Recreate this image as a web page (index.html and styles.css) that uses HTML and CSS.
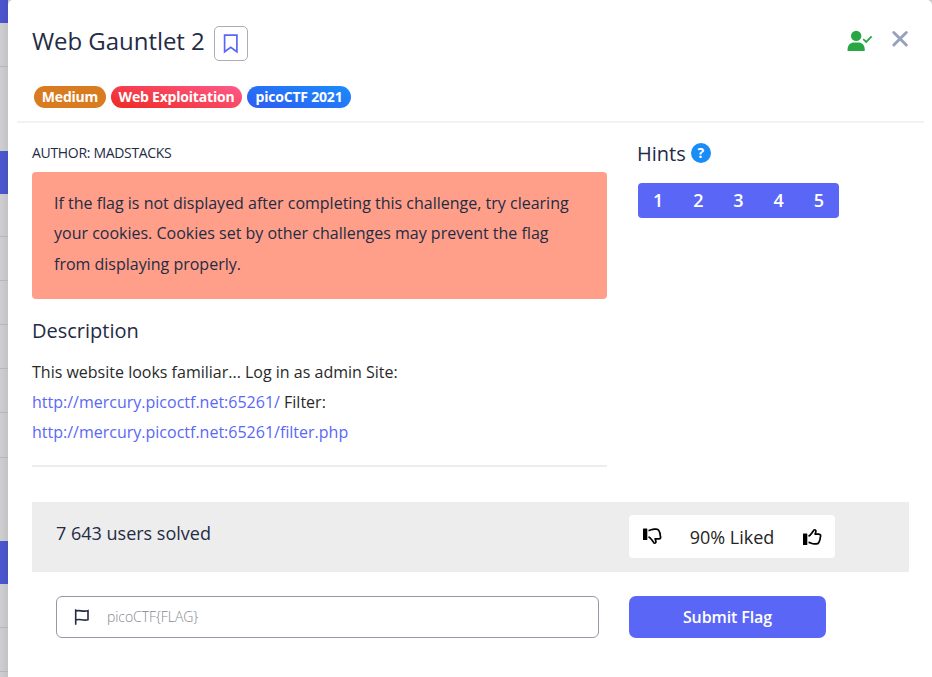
FILE: index.html
```html
<!DOCTYPE html>
<html lang="en">
<head>
<meta charset="utf-8">
<title>Web Gauntlet 2</title>
<link rel="stylesheet" href="styles.css">
</head>
<body>
<aside class="backdrop">
  <div class="cell active c23"></div>
  <div class="cell c44"></div>
  <div class="cell plain c84"></div>
  <div class="cell active c43"></div>
  <div class="cell c43"></div>
  <div class="cell c44"></div>
  <div class="cell c44"></div>
  <div class="cell c44"></div>
  <div class="cell c44"></div>
  <div class="cell c45"></div>
  <div class="cell plain c83"></div>
  <div class="cell active c43"></div>
  <div class="cell c44"></div>
  <div class="cell c44"></div>
  <div class="cell c44"></div>
</aside>
<main class="modal">
  <header class="head">
    <div class="title-row">
      <h1>Web Gauntlet 2</h1>
      <button class="bookmark" aria-label="Bookmark">
        <svg width="16" height="20" viewBox="0 0 16 20"><path d="M1.6 1.2h12.3v16.6l-6.15-4.5-6.15 4.5z" fill="none" stroke="#5a67f6" stroke-width="1.7"/></svg>
      </button>
      <div class="tools">
        <svg class="user" width="26" height="22" viewBox="0 0 26 22"><circle cx="9.2" cy="5.9" r="5.2" fill="#28a745"/><path d="M.6 21v-1.8c0-4 2.8-6.7 6.6-6.7h4c3.8 0 6.5 2.7 6.5 6.7V21z" fill="#28a745"/><path d="M16.2 9.200l3 2.700 5.400-5.500" fill="none" stroke="#28a745" stroke-width="1.8"/></svg>
        <svg class="close" width="18" height="18" viewBox="0 0 18 18"><path d="M2.8 2.5l12.500 12.500M15.300 2.500L2.800 15" stroke="#98a1bd" stroke-width="3" stroke-linecap="round"/></svg>
      </div>
    </div>
    <div class="tags">
      <span class="tag medium">Medium</span>
      <span class="tag web">Web Exploitation</span>
      <span class="tag event">picoCTF 2021</span>
    </div>
  </header>
  <div class="content">
    <section class="details">
      <p class="author">AUTHOR: MADSTACKS</p>
      <div class="alert">If the flag is not displayed after completing this challenge, try clearing your cookies. Cookies set by other challenges may prevent the flag from displaying properly.</div>
      <h2>Description</h2>
      <p class="desc">This website looks familiar... Log in as admin Site:<br><a>http://mercury.picoctf.net:65261/</a> Filter:<br><a>http://mercury.picoctf.net:65261/filter.php</a></p>
    </section>
    <section class="hints">
      <div class="hints-title"><h2>Hints</h2><span class="help">?</span></div>
      <div class="hint-list"><span>1</span><span>2</span><span>3</span><span>4</span><span>5</span></div>
    </section>
  </div>
  <section class="stats">
    <span class="solved">7 643 users solved</span>
    <div class="rating">
      <svg width="20" height="18" viewBox="0 0 20 18"><g transform="matrix(1 0 0 -1 0 17)"><rect x="1" y="5" width="4.300" height="11.500" rx=".6"/><path d="M6.500 8.300C8.800 7.200 9.600 4.900 11.300 3.200 11.700 1.200 14 1.300 13.900 3.300c0 1.100-.5 1.900-.8 2.800h3.800c1.700 0 2.200 1.700 1.400 3.100-.1 2.100-.6 4-1.500 5.300-.6 1.100-1.400 1.400-2.600 1.400h-2c-2.300 0-3.200-1.200-5.700-1.500" fill="none" stroke="#000" stroke-width="1.700" stroke-linejoin="round"/></g></svg>
      <span>90% Liked</span>
      <svg width="20" height="18" viewBox="0 0 20 18"><rect x="1" y="5.500" width="4.300" height="11.500" rx=".6"/><path d="M6.500 8.300C8.800 7.200 9.600 4.900 11.300 3.200 11.700 1.200 14 1.300 13.900 3.300c0 1.100-.5 1.900-.8 2.800h3.800c1.700 0 2.200 1.700 1.400 3.100-.1 2.100-.6 4-1.500 5.300-.6 1.100-1.400 1.400-2.600 1.400h-2c-2.300 0-3.200-1.200-5.700-1.500" fill="none" stroke="#000" stroke-width="1.700" stroke-linejoin="round"/></svg>
    </div>
  </section>
  <div class="submit-row">
    <label class="field">
      <svg width="16" height="17" viewBox="0 0 16 17"><path d="M1.700 .3v15.500M1.700 2c4-1.500 7 1.300 12.300-.3v9c-5 1.600-8-1.500-12.300.2" fill="none" stroke="#242b44" stroke-width="1.600"/></svg>
      <input type="text" placeholder="picoCTF{FLAG}">
    </label>
    <button class="submit">Submit Flag</button>
  </div>
</main>
</body>
</html>
```
FILE: styles.css
```css
* { box-sizing: border-box; }
body {
  margin: 0;
  width: 932px;
  height: 677px;
  overflow: hidden;
  display: flex;
  background: #c9c9cb;
  color: #242b44;
  font-family: "Open Sans", sans-serif;
  font-size: 16px;
}
h1, h2, p { margin: 0; font-weight: 400; }
button, input { font-family: inherit; }
svg { display: block; flex: none; }

.backdrop { width: 8px; height: 677px; overflow: hidden; flex: none; background: linear-gradient(90deg, #cfcfd1, #c3c3c5); }
.cell { border-bottom: 1px solid #b5b6c0; }
.cell.plain { border: 0; }
.cell.active { border: 0; background: linear-gradient(90deg, #4b57cf, #4651c2); }
.c23 { height: 23px; }
.c43 { height: 43px; }
.c44 { height: 44px; }
.c45 { height: 45px; }
.c83 { height: 83px; }
.c84 { height: 84px; }

.modal { flex: 1; height: 677px; background: #fff; border-radius: 5px 5px 0 0; }
.head { height: 123px; margin: 0 8px 0 9px; padding: 26px 0 0 15px; border-bottom: 2px solid #f2f2f3; }
.title-row { display: flex; height: 35px; }
h1 { width: 173px; font-size: 24px; line-height: 30px; letter-spacing: -0.05px; white-space: nowrap; }
.bookmark { width: 34px; height: 35px; margin-left: 9px; padding: 0; display: flex; align-items: center; justify-content: center; border: 1px solid #a9adb8; border-radius: 5px; background: #fff; }
.tools { display: flex; margin-left: auto; padding-right: 15px; }
.user { margin: 4px 18px 0 0; }
.close { margin-top: 4px; }
.tags { display: flex; gap: 5px; margin: 25px 0 0 2px; }
.tag { height: 22px; line-height: 22px; border-radius: 11px; color: #fff; font-size: 14px; font-weight: 700; letter-spacing: -0.2px; text-align: center; white-space: nowrap; }
.medium { width: 72px; background: #d97b20; }
.web { width: 131px; background: linear-gradient(15deg, #ee2920, #ff5b8c); }
.event { width: 104px; background: linear-gradient(15deg, #2f5bf4, #1a8cf9); }

.content { display: flex; height: 379px; padding-left: 24px; }
.details { width: 575px; height: 344px; border-bottom: 2px solid #ededee; }
.author { padding-top: 20px; height: 49px; font-size: 14px; line-height: 20px; letter-spacing: -0.32px; }
.alert { height: 127px; padding: 16px 22px; border-radius: 4px; background: #ff9f89; line-height: 30.4px; }
h2 { font-size: 20px; line-height: 30px; }
.details h2 { margin-top: 17px; }
.desc { margin-top: 11px; color: #292929; line-height: 30px; }
.desc a { color: #5a68f6; }
.hints { margin-left: 30px; padding-top: 16px; }
.hints-title { display: flex; }
.help { width: 20px; height: 20px; margin: 4px 0 0 5px; border-radius: 50%; background: #198cf8; color: #fff; font-size: 14px; font-weight: 700; line-height: 20px; text-align: center; }
.hint-list { display: flex; width: 201px; height: 35px; margin: 14px 0 0 1px; border-radius: 4px; background: #5a67f6; color: #fff; font-size: 18px; font-weight: 600; line-height: 35px; }
.hint-list span { flex: 1; text-align: center; }

.stats { display: flex; width: 877px; height: 70px; margin-left: 24px; padding-left: 24px; background: #ededed; }
.solved { width: 573px; font-size: 18px; line-height: 63px; }
.rating { display: flex; align-items: center; justify-content: space-between; width: 206px; height: 43px; margin-top: 13px; padding: 0 13px; border-radius: 4px; background: #fff; color: #242424; font-size: 18px; }

.submit-row { display: flex; gap: 30px; margin: 24px 0 0 48px; }
.field { display: flex; align-items: center; width: 543px; height: 42px; padding-left: 17px; border: 1px solid #9599a5; border-radius: 6px; }
.field input { flex: 1; margin-left: 17px; padding: 0 0 1px; border: 0; outline: 0; background: none; font-size: 14px; font-weight: 300; letter-spacing: -0.07px; }
.field input::placeholder { color: #85888f; }
.submit { width: 197px; height: 42px; padding: 0 0 1px; border: 0; border-radius: 7px; background: #5a67f6; color: #fff; font-size: 16px; font-weight: 600; letter-spacing: -0.1px; }
```
